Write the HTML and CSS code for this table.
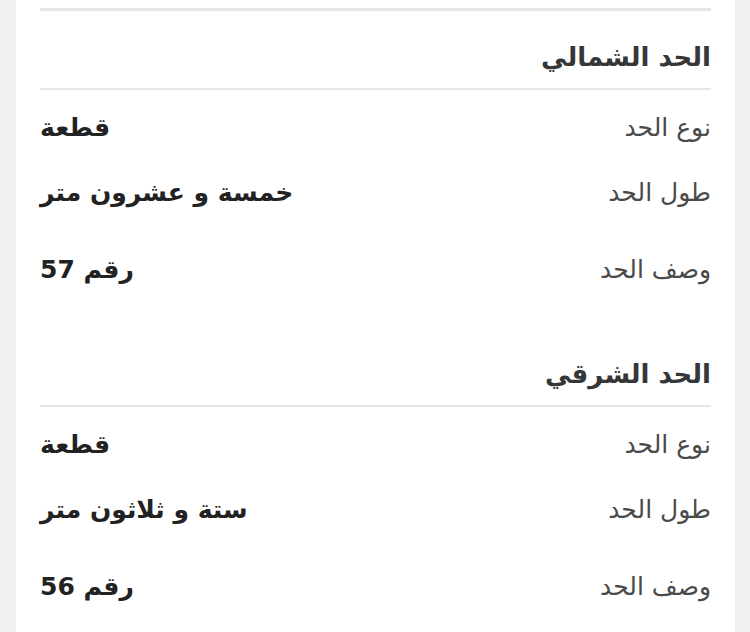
FILE: index.html
```html
<!DOCTYPE html>
<html lang="ar" dir="rtl">
<head>
<meta charset="utf-8">
<link rel="stylesheet" href="styles.css">
</head>
<body>
<div class="card">
  <div class="rule rule-top"></div>
  <section class="section">
    <h2 class="heading">الحد الشمالي</h2>
    <div class="rule"></div>
    <div class="row"><span class="label">نوع الحد</span><span class="value">قطعة</span></div>
    <div class="row"><span class="label">طول الحد</span><span class="value">خمسة و عشرون متر</span></div>
    <div class="row row-desc"><span class="label">وصف الحد</span><span class="value">رقم 57</span></div>
  </section>
  <section class="section section-next">
    <h2 class="heading">الحد الشرقي</h2>
    <div class="rule"></div>
    <div class="row"><span class="label">نوع الحد</span><span class="value">قطعة</span></div>
    <div class="row"><span class="label">طول الحد</span><span class="value">ستة و ثلاثون متر</span></div>
    <div class="row row-desc"><span class="label">وصف الحد</span><span class="value">رقم 56</span></div>
  </section>
</div>
</body>
</html>
```
FILE: styles.css
```css
html, body {
  margin: 0;
  padding: 0;
  background: #f1f1f1;
}
body {
  font-family: "DejaVu Sans", "Noto Sans", sans-serif;
  color: #333;
}
.card {
  background: #fff;
  margin: 0 15px 0 16px;
  padding: 8px 24px 0 24px;
  min-height: 632px;
  box-sizing: border-box;
}
.rule {
  height: 2px;
  background: #e6e6e6;
}
.rule-top {
  height: 3px;
}
.section {
  display: flex;
  flex-direction: column;
}
.section-next {
  margin-top: 31px;
}
.heading {
  margin: 0;
  padding: 28px 0 13px;
  font-size: 26px;
  font-weight: bold;
  color: #363636;
  line-height: 36px;
}
.row {
  display: flex;
  justify-content: space-between;
  align-items: baseline;
  height: 56px;
  margin-top: 9px;
  padding-top: 12px;
  box-sizing: border-box;
}
.row-desc {
  margin-top: 21px;
}
.label {
  font-size: 25px;
  color: #4a4a4a;
  line-height: 30px;
}
.value {
  font-size: 25px;
  font-weight: bold;
  color: #222;
  line-height: 34px;
}
```
